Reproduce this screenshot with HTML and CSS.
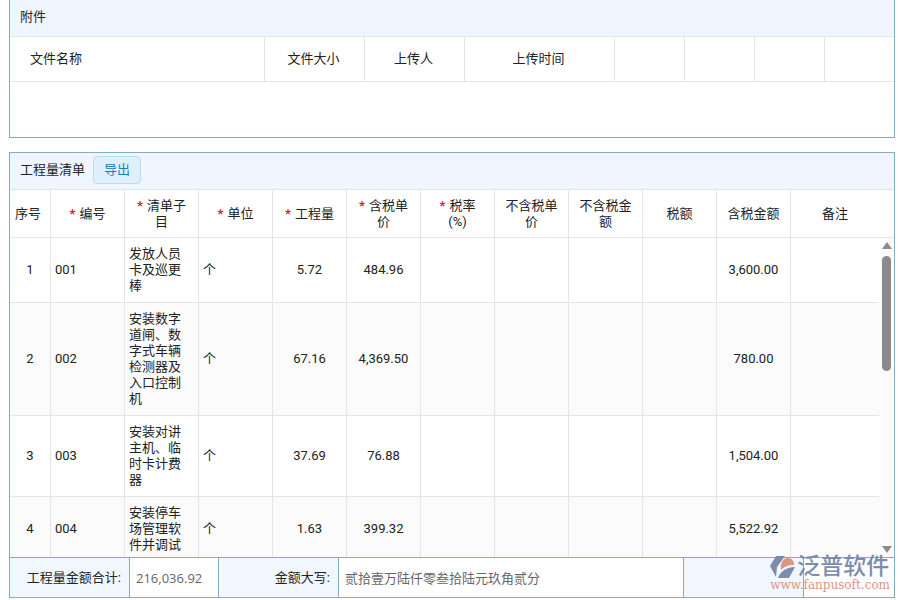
FILE: index.html
```html
<!DOCTYPE html>
<html lang="zh-CN">
<head>
<meta charset="UTF-8">
<meta name="viewport" content="width=device-width, initial-scale=1">
<title>工程量清单</title>
<link rel="stylesheet" href="styles.css">
</head>
<body>

	<!-- 附件 -->
	<div class="panel attach">
		<div class="panel-head">附件</div>
		<table class="attach-table">
			<colgroup>
				<col><col class="w100"><col class="w100"><col class="w150"><col class="w70"><col class="w70"><col class="w70"><col class="last">
			</colgroup>
			<thead>
				<tr>
					<th class="left">文件名称</th>
					<th>文件大小</th>
					<th>上传人</th>
					<th>上传时间</th>
					<th></th>
					<th></th>
					<th></th>
					<th></th>
				</tr>
			</thead>
		</table>
	</div>

	<!-- 工程量清单 -->
	<div class="panel list">
		<div class="panel-head">工程量清单<button type="button" class="export">导出</button></div>
		<table class="grid grid-head">
			<colgroup>
				<col class="no"><col class="w74"><col class="w74"><col class="w74"><col class="w74"><col class="w74"><col class="w74"><col class="w74"><col class="w74"><col class="w74"><col class="w74"><col>
			</colgroup>
			<thead>
				<tr>
					<th>序号</th>
					<th><i>*</i>编号</th>
					<th><i>*</i>清单子目</th>
					<th><i>*</i>单位</th>
					<th><i>*</i>工程量</th>
					<th><i>*</i>含税单价</th>
					<th><i>*</i>税率 (%)</th>
					<th>不含税单价</th>
					<th>不含税金额</th>
					<th>税额</th>
					<th>含税金额</th>
					<th>备注</th>
				</tr>
			</thead>
		</table>
		<div class="grid-body">
			<div class="rows">
				<table class="grid">
					<colgroup>
						<col class="no"><col class="w74"><col class="w74"><col class="w74"><col class="w74"><col class="w74"><col class="w74"><col class="w74"><col class="w74"><col class="w74"><col class="w74"><col>
					</colgroup>
					<tbody>
						<tr>
							<td>1</td><td class="left">001</td><td class="left">发放人员卡及巡更棒</td><td class="left">个</td>
							<td>5.72</td><td>484.96</td><td></td><td></td><td></td><td></td><td>3,600.00</td><td></td>
						</tr>
						<tr>
							<td>2</td><td class="left">002</td><td class="left">安装数字道闸、数字式车辆检测器及入口控制机</td><td class="left">个</td>
							<td>67.16</td><td>4,369.50</td><td></td><td></td><td></td><td></td><td>780.00</td><td></td>
						</tr>
						<tr>
							<td>3</td><td class="left">003</td><td class="left">安装对讲主机、临时卡计费器</td><td class="left">个</td>
							<td>37.69</td><td>76.88</td><td></td><td></td><td></td><td></td><td>1,504.00</td><td></td>
						</tr>
						<tr>
							<td>4</td><td class="left">004</td><td class="left">安装停车场管理软件并调试</td><td class="left">个</td>
							<td>1.63</td><td>399.32</td><td></td><td></td><td></td><td></td><td>5,522.92</td><td></td>
						</tr>
					</tbody>
				</table>
			</div>
			<div class="scroll">
				<span class="arrow up"></span>
				<span class="thumb"></span>
				<span class="arrow down"></span>
			</div>
		</div>
		<div class="total">
			<label for="sum">工程量金额合计:</label>
			<input id="sum" type="text" value="216,036.92" readonly>
			<label for="sumCn">金额大写:</label>
			<input id="sumCn" type="text" value="贰拾壹万陆仟零叁拾陆元玖角贰分" readonly>
			<div class="blank"></div>
			<div></div>
		</div>
	</div>

	<div class="logo">
		<div class="logo-top">
			<svg width="26" height="24" viewBox="0 0 26 24">
				<path fill="#7d8bad" d="M6 0h9L7 11l-1 10L0 10z"/>
				<path fill="#dc9583" d="M11 14C10 7 13 2 18 2c4 0 6 3 6 7-5 0-9 1-13 5z"/>
				<path fill="#7d8bad" d="M25 11l-6 11H8c2-6 8-11 17-11z"/>
			</svg>
			<span>泛普软件</span>
		</div>
		<div class="logo-url">www.fanpusoft.com</div>
	</div>

</body>
</html>
```
FILE: styles.css
```css
*{
	box-sizing:border-box;
}
body{
	margin:0;
	padding:0 5px 2px 9px;
	height:100vh;
	display:flex;
	flex-direction:column;
	gap:14px;
	background:#fff;
	color:#222;
	font:13px/16px Roboto,"Noto Sans CJK SC",sans-serif;
}
.panel{
	border:1px solid #86adbf;
}
.panel-head{
	display:flex;
	align-items:center;
	gap:8px;
	height:37px;
	padding:0 10px 2px;
	background:#f0f6ff;
	border-bottom:1px solid #e4e5e7;
}
table{
	width:100%;
	table-layout:fixed;
	border-collapse:separate;
	border-spacing:0;
}
th,td{
	border-right:1px solid #e4e5e7;
	border-bottom:1px solid #e4e5e7;
	text-align:center;
	font-weight:normal;
}
th:last-child,td:last-child{
	border-right:none;
}
.w70{width:70px;}
.w74{width:74px;}
.w100{width:100px;}
.w150{width:150px;}
.no{width:41px;}
.last{width:69px;}

/* 附件 */
.attach{
	flex:none;
	height:138px;
	border-top:none;
}
.attach-table th{
	height:45px;
	padding:0 2px 0 0;
}
.attach-table th.left{
	padding-left:20px;
	text-align:left;
}

/* 工程量清单 */
.list{
	flex:1;
	min-height:0;
	display:flex;
	flex-direction:column;
}
.list .panel-head,.grid-head,.total{
	flex:none;
}
.export{
	height:28px;
	padding:0 10px;
	border:1px solid #bddbea;
	border-radius:4px;
	background:#dfeffc;
	color:#1c80b8;
	font:inherit;
}
.grid th{
	height:48px;
	padding:0 10px;
}
.grid th:first-child{
	padding:0 4px 0 0;
}
.grid th:last-child{
	padding-right:25px;
}
.grid i{
	margin-right:4px;
	color:#e02020;
	font-style:normal;
	font-weight:bold;
}
.grid td{
	padding:8px 5px;
}
.grid td.left{
	padding-right:6px;
	padding-left:4px;
	text-align:left;
}
.grid tbody tr:nth-child(even){
	background:#fbfbfb;
}
.grid-body{
	flex:1;
	min-height:0;
	display:flex;
}
.rows{
	flex:1;
	overflow-y:auto;
	scrollbar-width:none;
}
.scroll{
	width:15px;
	padding:4px 3px;
	display:flex;
	flex-direction:column;
	align-items:center;
	background:#fcfcfc;
}
.arrow{
	border:5px solid transparent;
}
.up{
	border-top:none;
	border-bottom:7px solid #8b8b8b;
}
.down{
	margin-top:auto;
	border-bottom:none;
	border-top:7px solid #8b8b8b;
}
.thumb{
	width:9px;
	height:37%;
	margin-top:7px;
	border-radius:5px;
	background:#8b8b8b;
}
.total{
	display:grid;
	grid-template-columns:120px 89px 120px 345px 120px 1fr;
	height:40px;
	border-top:1px solid #86adbf;
}
.total label,.total input,.blank{
	border:none;
	border-right:1px solid #86adbf;
}
.total label{
	padding-right:8px;
	background:#f0f7ff;
	line-height:39px;
	text-align:right;
}
.total input{
	min-width:0;
	padding:0 6px;
	background:#fff;
	color:#666;
	font:13px "Open Sans","Noto Sans CJK SC",sans-serif;
	outline:none;
}
.blank{
	background:#f0f7ff;
}

/* 右下角标志 */
.logo{
	position:absolute;
	right:10px;
	bottom:9px;
}
.logo-top{
	display:flex;
	gap:1px;
	height:23px;
	color:#7d8bad;
	font-size:23px;
	font-weight:500;
	line-height:22px;
}
.logo-url{
	color:#dc9583;
	font:12px/12px "DejaVu Serif",serif;
}
```
